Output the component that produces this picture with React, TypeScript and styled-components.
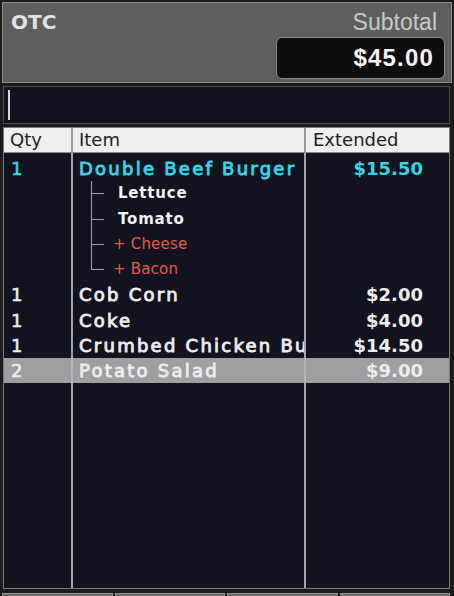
import React from 'react';
import styled, { createGlobalStyle, css } from 'styled-components';

type Line = {
  qty?: number;
  name: string;
  price?: string;
  kind: 'item' | 'mod' | 'add';
  current?: boolean;
  selected?: boolean;
  last?: boolean;
};

const lines: Line[] = [
  { qty: 1, name: 'Double Beef Burger', price: '$15.50', kind: 'item', current: true },
  { name: 'Lettuce', kind: 'mod' },
  { name: 'Tomato', kind: 'mod' },
  { name: '+ Cheese', kind: 'add' },
  { name: '+ Bacon', kind: 'add', last: true },
  { qty: 1, name: 'Cob Corn', price: '$2.00', kind: 'item' },
  { qty: 1, name: 'Coke', price: '$4.00', kind: 'item' },
  { qty: 1, name: 'Crumbed Chicken Bu', price: '$14.50', kind: 'item' },
  { qty: 2, name: 'Potato Salad', price: '$9.00', kind: 'item', selected: true },
];

const GlobalStyle = createGlobalStyle`
  html, body {
    margin: 0;
    padding: 0;
    overflow: hidden;
    background: #1c1c1d;
  }
  * {
    box-sizing: border-box;
  }
`;

export default function App() {
  return (
    <>
      <GlobalStyle />
      <Screen>
        <Header>
          <Title>OTC</Title>
          <TotalBlock>
            <SubLabel>Subtotal</SubLabel>
            <TotalBox>$45.00</TotalBox>
          </TotalBlock>
        </Header>

        <EntryBar>
          <Caret />
        </EntryBar>

        <Table>
          <HeadRow>
            <HeadCell>Qty</HeadCell>
            <HeadCell>Item</HeadCell>
            <HeadCell>Extended</HeadCell>
          </HeadRow>
          <Body>
            {lines.map((l, i) =>
              l.kind === 'item' ? (
                <Row key={i} $selected={l.selected} $current={l.current}>
                  <QtyCell>{l.qty}</QtyCell>
                  <ItemCell>{l.name}</ItemCell>
                  <PriceCell>{l.price}</PriceCell>
                </Row>
              ) : (
                <Row key={i}>
                  <QtyCell />
                  <ModCell>
                    <Branch $last={l.last} />
                    <ModText $added={l.kind === 'add'}>{l.name}</ModText>
                  </ModCell>
                  <PriceCell />
                </Row>
              )
            )}
          </Body>
        </Table>

        <Footer>
          <FootButton />
          <FootButton />
          <FootButton />
          <FootButton />
        </Footer>
      </Screen>
    </>
  );
}

const Screen = styled.div`
  width: 454px;
  height: 596px;
  padding: 2px 4px 0 2px;
  display: flex;
  flex-direction: column;
  gap: 3px;
  overflow: hidden;
`;

const Header = styled.div`
  height: 81px;
  flex-shrink: 0;
  margin-right: -2px;
  background: #5e5e5e;
  border: 1px solid #8a8a8a;
  padding: 6px 6px 3px 8px;
  display: flex;
  justify-content: space-between;
`;

const Title = styled.div`
  font-family: 'DejaVu Sans', sans-serif;
  font-weight: bold;
  font-size: 20px;
  line-height: 26px;
  color: #e2e2e2;
`;

const TotalBlock = styled.div`
  display: flex;
  flex-direction: column;
  align-items: flex-end;
  gap: 2px;
`;

const SubLabel = styled.div`
  font-family: 'Liberation Sans', Arial, sans-serif;
  font-size: 23px;
  line-height: 26px;
  color: #c9c9c9;
  margin-right: 8px;
`;

const TotalBox = styled.div`
  width: 169px;
  height: 43px;
  background: #0e0e0f;
  border: 1px solid #888;
  border-radius: 6px;
  padding-right: 10px;
  font-family: 'Liberation Sans', Arial, sans-serif;
  font-weight: bold;
  font-size: 24px;
  letter-spacing: 1.2px;
  color: #f4f4f4;
  display: flex;
  align-items: center;
  justify-content: flex-end;
`;

const EntryBar = styled.div`
  height: 38px;
  flex-shrink: 0;
  margin-left: 1px;
  background: #13121e;
  border: 1px solid #4a4a4f;
  padding: 3px 4px;
  display: flex;
`;

const Caret = styled.div`
  width: 2px;
  background: #d8d8d8;
`;

const Table = styled.div`
  height: 462px;
  flex-shrink: 0;
  margin-left: 1px;
  border: 1px solid #7a7a7e;
  background: #13121f;
  display: flex;
  flex-direction: column;
`;

const columns = css`
  display: grid;
  grid-template-columns: 69px 233px 1fr;
`;

const HeadRow = styled.div`
  ${columns};
  height: 25px;
  background:
    linear-gradient(to right,
      transparent 67px, #9a9a9a 67px, #9a9a9a 69px, transparent 69px,
      transparent 300px, #9a9a9a 300px, #9a9a9a 302px, transparent 302px),
    #efefef;
  border-bottom: 1px solid #8a8a8a;
`;

const HeadCell = styled.div`
  font-family: 'DejaVu Sans', sans-serif;
  font-size: 18px;
  line-height: 24px;
  color: #222;
  padding-left: 6px;
  white-space: nowrap;
  &:last-child {
    padding-left: 7px;
  }
`;

const Body = styled.div`
  flex: 1;
  padding-top: 3px;
  background: linear-gradient(to right,
    transparent 67px, #a4a4a8 67px, #a4a4a8 69px, transparent 69px,
    transparent 300px, #a4a4a8 300px, #a4a4a8 302px, transparent 302px);
`;

const Row = styled.div<{ $selected?: boolean; $current?: boolean }>`
  ${columns};
  height: 25.25px;
  font-family: 'DejaVu Sans', sans-serif;
  font-size: 18px;
  line-height: 25px;
  color: ${(p) => (p.$current ? '#2fd6e6' : '#ececec')};
  background: ${(p) => (p.$selected ? 'rgba(186, 186, 186, 0.84)' : 'transparent')};
`;

const QtyCell = styled.div`
  padding-left: 7px;
  -webkit-text-stroke: 0.6px currentColor;
`;

const ItemCell = styled.div`
  padding-left: 6px;
  margin-right: 2px;
  letter-spacing: 2.25px;
  -webkit-text-stroke: 0.9px currentColor;
  white-space: nowrap;
  overflow: hidden;
`;

const PriceCell = styled.div`
  text-align: right;
  padding-right: 26px;
  font-weight: bold;
`;

const ModCell = styled.div`
  display: flex;
  align-items: center;
  padding-left: 18px;
`;

const Branch = styled.span<{ $last?: boolean }>`
  position: relative;
  align-self: stretch;
  width: 13px;
  flex-shrink: 0;
  &::before {
    content: '';
    position: absolute;
    left: 0;
    top: 0;
    width: 1px;
    height: ${(p) => (p.$last ? '13px' : '100%')};
    background: #a2a2a6;
  }
  &::after {
    content: '';
    position: absolute;
    left: 0;
    top: 12px;
    width: 13px;
    height: 1px;
    background: #a2a2a6;
  }
`;

const ModText = styled.span<{ $added?: boolean }>`
  font-size: 15px;
  font-weight: ${(p) => (p.$added ? 'normal' : 'bold')};
  letter-spacing: ${(p) => (p.$added ? '0.2px' : '0.8px')};
  color: ${(p) => (p.$added ? '#e35a48' : '#f2f2f2')};
  margin-left: ${(p) => (p.$added ? '9px' : '14px')};
  white-space: nowrap;
`;

const Footer = styled.div`
  display: flex;
  gap: 2px;
  margin-top: 1px;
  flex-shrink: 0;
`;

const FootButton = styled.div`
  flex: 1;
  height: 40px;
  background: #6b6b6b;
  border: 1px solid #8e8e8e;
`;
